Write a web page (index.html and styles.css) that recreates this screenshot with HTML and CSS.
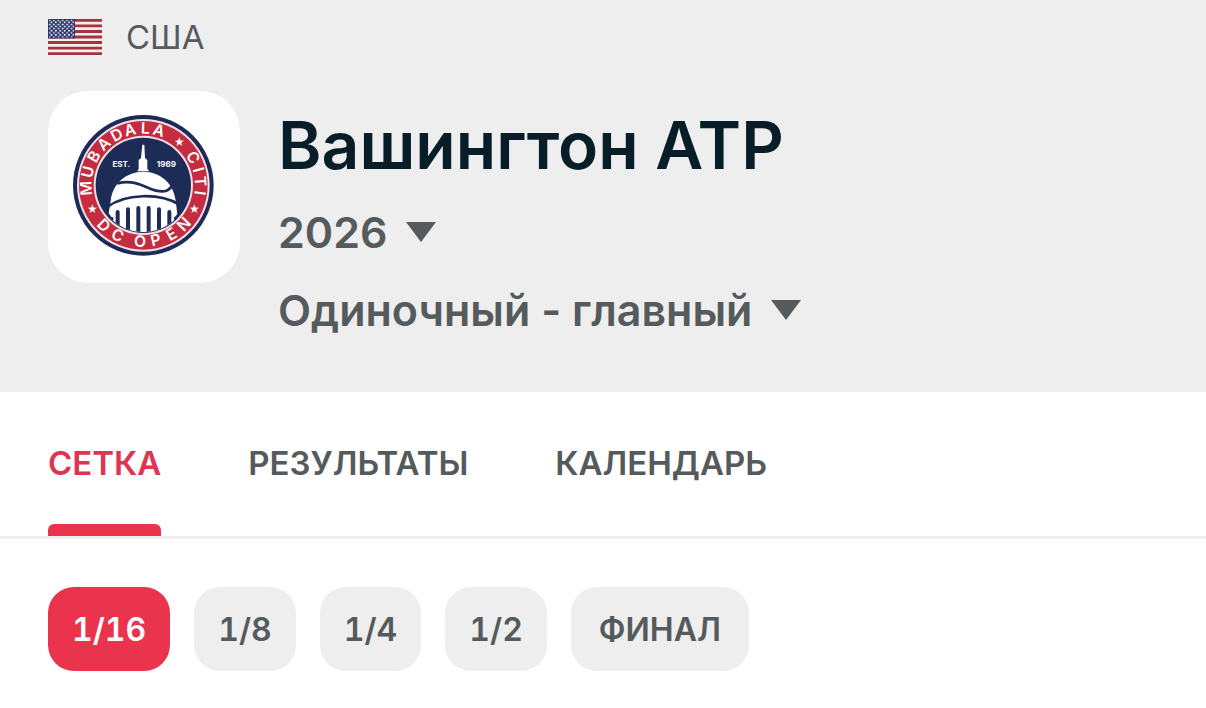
FILE: index.html
```html
<!DOCTYPE html>
<html lang="ru">
<head>
<meta charset="utf-8">
<meta name="viewport" content="width=device-width, initial-scale=1">
<title>Вашингтон ATP</title>
<link rel="stylesheet" href="styles.css">
</head>
<body>
<header class="hero">
  <div class="country">
    <svg class="flag" viewBox="0 0 54 36" aria-hidden="true">
      <defs>
        <pattern id="stars" width="4.4" height="4.2" patternUnits="userSpaceOnUse">
          <circle cx="1.5" cy="1.3" r=".9" fill="#fff"/>
          <circle cx="3.500" cy="3.3" r=".9" fill="#fff"/>
        </pattern>
      </defs>
      <path fill="#f4eeee" d="M0 0h54v36H0z"/>
      <path stroke="#a4343f" stroke-width="2.77" d="M0 1.4h54M0 6.9h54M0 12.5h54M0 18h54M0 23.5h54M0 29.1h54M0 34.6h54"/>
      <path fill="#2b356b" d="M0 0h27v19.4H0z"/>
      <path fill="url(#stars)" d="M1 .6h25v18H1z"/>
    </svg>
    <span class="country-name">США</span>
  </div>
  <div class="event">
    <div class="logo-card">
      <svg class="logo" viewBox="96 93 432 432" role="img" aria-label="Mubadala Citi DC Open">
        <defs>
          <path id="arc-top" d="M310 459A155 155 0 0 1 310 149A155 155 0 0 1 310 459"/>
          <path id="arc-bottom" d="M125 304A185 185 0 0 0 495 304"/>
          <path id="star" d="M0-14 3.500-4.500 14-4 5.500 2 9 12 0 6-9 12-5.500 2-14-4-3.500-4.500z"/>
          <clipPath id="inner"><circle cx="310" cy="304" r="140"/></clipPath>
        </defs>
        <circle cx="310" cy="304" r="211" fill="#1d2b57"/>
        <circle cx="310" cy="304" r="199" fill="#f3dfe7"/>
        <circle cx="310" cy="304" r="193" fill="#c52c40"/>
        <circle cx="310" cy="304" r="149" fill="#f3dfe7"/>
        <circle cx="310" cy="304" r="143" fill="#1d2b57"/>
        <g class="logo-ring">
          <text><textPath href="#arc-top"><tspan x="235 280 325 369 412 450 492 530">MUBADALA</tspan></textPath></text>
          <text><textPath href="#arc-top"><tspan x="651 688 719 751">CITI</tspan></textPath></text>
          <text><textPath href="#arc-bottom"><tspan x="146 203 246 280 332 387 440">DC OPEN</tspan></textPath></text>
        </g>
        <g fill="#fff">
          <use href="#star" x="418" y="174"/>
          <use href="#star" x="463" y="375"/>
          <use href="#star" x="157" y="375"/>
        </g>
        <text class="logo-small" x="244" y="250">EST.</text>
        <text class="logo-small" x="379" y="250">1969</text>
        <g clip-path="url(#inner)">
          <path fill="#fff" d="M307 182h6l2 40 7 6v26l6 8h-36l4-8v-26l7-6z"/>
          <path fill="#fff" d="M212 352C216 300 258 263 310 263S402 300 407 350L412 390 404 400V450H215V400L206 388z"/>
          <path fill="none" stroke="#1d2b57" stroke-width="8" d="M232 298C290 284 318 314 348 320S384 320 400 303M202 369C255 328 360 326 418 362"/>
          <path fill="none" stroke="#1d2b57" stroke-width="12" stroke-linecap="round" d="M233 384V460M264 376V460M295 372V460M326 372V460M357 376V460M388 384V460"/>
          <path fill="#1d2b57" d="M200 400 220 400 220 460 200 460zM402 400H420V460H402z"/>
        </g>
      </svg>
    </div>
    <div class="details">
      <h1 class="title">Вашингтон ATP</h1>
      <div class="picker">
        <select class="picker-select" aria-label="Сезон"><option>2026</option></select>
        <svg class="caret" viewBox="0 0 30 20" aria-hidden="true"><path d="M0 0h30L15 20z"/></svg>
      </div>
      <div class="picker">
        <select class="picker-select" aria-label="Разряд"><option>Одиночный - главный</option></select>
        <svg class="caret" viewBox="0 0 30 20" aria-hidden="true"><path d="M0 0h30L15 20z"/></svg>
      </div>
    </div>
  </div>
</header>
<nav class="tabs">
  <a class="tab tab-active" href="#draw" aria-current="page">СЕТКА</a>
  <a class="tab" href="#results">РЕЗУЛЬТАТЫ</a>
  <a class="tab" href="#calendar">КАЛЕНДАРЬ</a>
</nav>
<main class="rounds">
  <button class="round round-active" type="button" aria-pressed="true">1/16</button>
  <button class="round" type="button">1/8</button>
  <button class="round" type="button">1/4</button>
  <button class="round" type="button">1/2</button>
  <button class="round round-final" type="button">ФИНАЛ</button>
</main>
</body>
</html>
```
FILE: styles.css
```css
* {
  box-sizing: border-box;
}

body {
  margin: 0;
  background: #fff;
  color: #555a5c;
  font-family: Inter, Roboto, sans-serif;
}

.hero {
  padding: 16px 48px 43px;
  background: #eee;
}

.country {
  display: flex;
  align-items: center;
  gap: 24px;
  height: 42px;
}

.flag {
  width: 54px;
  height: 36px;
}

.country-name {
  font-size: 33px;
  line-height: 40px;
}

.event {
  display: flex;
  align-items: flex-start;
  gap: 38px;
  margin-top: 33px;
}

.logo-card {
  flex: none;
  padding: 24px;
  border-radius: 40px;
  background: #fff;
}

.logo {
  display: block;
  width: 144px;
  height: 144px;
}

.logo-ring {
  fill: #fff;
  font-size: 47px;
  font-weight: 600;
  text-anchor: middle;
}

.logo-small {
  fill: #fff;
  font-size: 24px;
  font-weight: 700;
  text-anchor: middle;
}

.details {
  display: flex;
  flex-direction: column;
  align-items: flex-start;
  padding-top: 14px;
}

.title {
  margin: 0 0 8px;
  color: #071d27;
  font-size: 66px;
  font-weight: 600;
  line-height: 80px;
}

.picker {
  display: flex;
  align-items: center;
  gap: 18px;
  height: 78px;
}

.picker-select {
  appearance: none;
  padding: 0;
  border: 0;
  background: transparent;
  color: inherit;
  font: inherit;
  font-size: 43px;
  font-weight: 600;
  line-height: 56px;
}

.caret {
  width: 30px;
  height: 20px;
  fill: #555a5c;
}

.tabs {
  display: flex;
  gap: 87px;
  padding: 0 48px;
  border-bottom: 3px solid #eee;
}

.tab {
  display: flex;
  flex-direction: column;
  height: 144px;
  padding-top: 51px;
  color: inherit;
  font-size: 33px;
  font-weight: 600;
  line-height: 40px;
  text-decoration: none;
}

.tab-active {
  color: #de3552;
}

.tab-active::after {
  content: "";
  height: 12px;
  margin-top: auto;
  border-radius: 6px 6px 0 0;
  background: #ea344e;
}

.rounds {
  display: flex;
  flex-wrap: wrap;
  gap: 24px;
  padding: 48px;
}

.round {
  height: 84px;
  padding: 0 24px;
  border: 0;
  border-radius: 26px;
  background: #eee;
  color: inherit;
  font: inherit;
  font-size: 32px;
  font-variant-numeric: tabular-nums;
  font-weight: 600;
}

.round-active {
  background: #ea344e;
  color: #fff;
}

.round-final {
  padding: 0 28px;
}
```
